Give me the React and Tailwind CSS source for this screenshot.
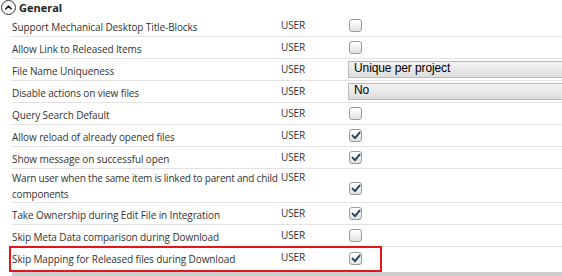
import { ChevronUp } from 'lucide-react'

const rows = [
  { label: 'Support Mechanical Desktop Title-Blocks', type: 'check', checked: false },
  { label: 'Allow Link to Released Items', type: 'check', checked: false },
  { label: 'File Name Uniqueness', type: 'select', value: 'Unique per project' },
  { label: 'Disable actions on view files', type: 'select', value: 'No' },
  { label: 'Query Search Default', type: 'check', checked: false },
  { label: 'Allow reload of already opened files', type: 'check', checked: true },
  { label: 'Show message on successful open', type: 'check', checked: true },
  { label: 'Warn user when the same item is linked to parent and child', label2: 'components', type: 'check', checked: true, tall: true },
  { label: 'Take Ownership during Edit File in Integration', type: 'check', checked: true },
  { label: 'Skip Meta Data comparison during Download', type: 'check', checked: false },
  { label: 'Skip Mapping for Released files during Download', type: 'check', checked: true, highlight: true },
]

function Checkbox({ checked }) {
  return (
    <span className="w-[13px] h-[13px] rounded-[3px] border border-[#9a9a9a] bg-gradient-to-b from-white to-[#e2e2e2] flex items-center justify-center shadow-[inset_0_1px_0_#fff]">
      {checked && (
        <svg width="10" height="9" viewBox="0 0 10 9">
          <path d="M1.5 4.6 L4 7.2 L8.6 1.6" fill="none" stroke="#23405f" strokeWidth="1.9" strokeLinecap="round" strokeLinejoin="round" />
        </svg>
      )}
    </span>
  )
}

function Select({ value }) {
  return (
    <div className="flex-1 h-[17px] mr-[-4px] border border-[#b9b9b9] bg-gradient-to-b from-[#f3f3f3] to-[#dddddd] pl-[5px] leading-[13px] text-[12px] text-black font-['Liberation_Sans',sans-serif]">
      {value}
    </div>
  )
}

function Row({ row }) {
  return (
    <div
      className={
        'flex border-b border-[#e3e3e3] ' +
        (row.tall ? 'h-[34px] ' : 'h-[22px] ') +
        (row.highlight ? 'outline-2 outline-[#e8141b] -outline-offset-1 mr-[181px] -ml-[2px] pl-[2px] h-[24px] ' : '')
      }
    >
      <div className={'w-[269px] shrink-0 text-[#333] leading-[16px] whitespace-nowrap ' + (row.tall ? 'pt-[1px] tracking-[-0.2px]' : 'pt-[4px]')}>
        {row.label}
        {row.label2 && (
          <>
            <br />
            {row.label2}
          </>
        )}
      </div>
      <div className={'w-[67px] shrink-0 text-[#333] leading-[15px] ' + (row.tall ? 'pt-[1px]' : 'pt-[3px]')}>USER</div>
      <div className={'flex-1 flex ' + (row.type === 'select' ? 'items-center' : 'items-center pl-[1px]') + (row.tall ? ' pt-[6px]' : '')}>
        {row.type === 'check' ? <Checkbox checked={row.checked} /> : <Select value={row.value} />}
      </div>
    </div>
  )
}

export default function App() {
  return (
    <div className="w-[562px] h-[276px] overflow-hidden bg-white font-['Open_Sans',sans-serif] text-[10px] tracking-[-0.1px]">
      <div className="h-[15px] flex items-center gap-[3px] pl-[1px]">
        <span className="w-[15px] h-[15px] rounded-full border-[1.5px] border-[#333] flex items-center justify-center">
          <ChevronUp size={11} strokeWidth={3.2} color="#222" />
        </span>
        <span className="font-bold text-[11px] tracking-normal leading-[15px] text-[#222]">General</span>
      </div>
      <div className="pl-[12px]">
        {rows.map((r, i) => (
          <Row key={i} row={r} />
        ))}
        <div className="h-[6px] mt-[1px] bg-[#cfcfcf]" />
      </div>
    </div>
  )
}
